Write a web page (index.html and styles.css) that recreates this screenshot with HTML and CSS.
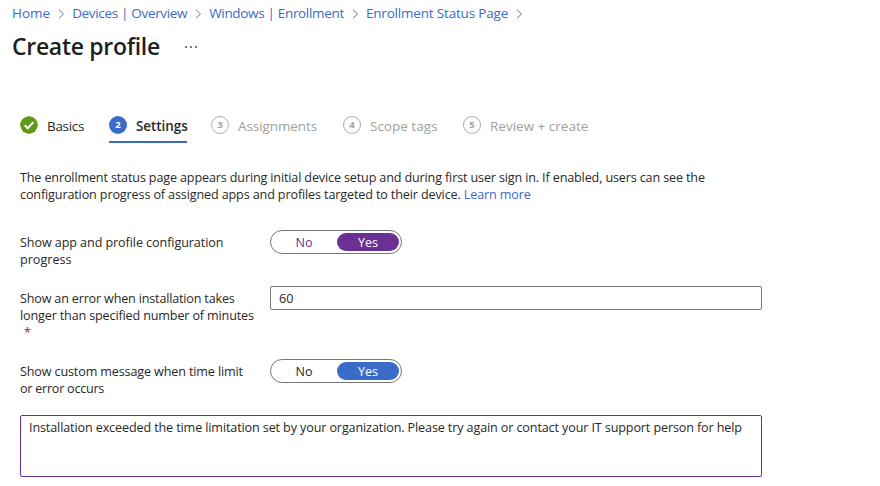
FILE: index.html
```html
<!DOCTYPE html>
<html lang="en">
<head>
<meta charset="utf-8">
<title>Create profile</title>
<link rel="stylesheet" href="styles.css">
</head>
<body>
<nav class="crumbs">
<a class="c-home">Home</a><svg class="chev" viewBox="0 0 7 10"><path d="M1 .8 5.5 5 1 9.2"/></svg>
<a class="c-devices">Devices | Overview</a><svg class="chev" viewBox="0 0 7 10"><path d="M1 .8 5.5 5 1 9.2"/></svg>
<a class="c-windows">Windows | Enrollment</a><svg class="chev" viewBox="0 0 7 10"><path d="M1 .8 5.5 5 1 9.2"/></svg>
<a class="c-status">Enrollment Status Page</a><svg class="chev" viewBox="0 0 7 10"><path d="M1 .8 5.5 5 1 9.2"/></svg>
</nav>
<header class="heading">
<h1>Create profile</h1>
<svg class="more" viewBox="0 0 12 2"><path d="M0 0h2v2H0zM5 0h2v2H5zM10 0h2v2h-2z"/></svg>
</header>
<div class="steps">
<div class="step basics"><svg class="dot" viewBox="0 0 18 18"><circle cx="9" cy="9" r="9" fill="#5f9a17"/><path d="m4.7 9.2 3 3 5.6-6" fill="none" stroke="#fff" stroke-width="2"/></svg><span>Basics</span></div>
<div class="step active"><i class="dot">2</i><span>Settings</span></div>
<div class="step todo assignments"><i class="dot">3</i><span>Assignments</span></div>
<div class="step todo scope"><i class="dot">4</i><span>Scope tags</span></div>
<div class="step todo review"><i class="dot">5</i><span>Review + create</span></div>
</div>
<main>
<p class="intro"><span class="i1">The enrollment status page appears during initial device setup and during first user sign in. If enabled, users can see the</span><br><span class="i2">configuration progress of assigned apps and profiles targeted to their device. <a>Learn more</a></span></p>
<div class="row first">
<div class="label"><span class="l1">Show app and profile configuration</span><br>progress</div>
<div class="toggle purple"><span>No</span><b>Yes</b></div>
</div>
<div class="row second">
<div class="label"><span class="l2">Show an error when installation takes</span><br><span class="l3">longer than specified number of minutes</span><br><em>*</em></div>
<div class="input">60</div>
</div>
<div class="row third">
<div class="label"><span class="l4">Show custom message when time limit</span><br><span class="l5">or error occurs</span></div>
<div class="toggle"><span>No</span><b>Yes</b></div>
</div>
<div class="message"><span>Installation exceeded the time limitation set by your organization. Please try again or contact your IT support person for help</span></div>
</main>
</body>
</html>
```
FILE: styles.css
```css
* { box-sizing: border-box; }
body { margin: 0; width: 880px; height: 486px; overflow: hidden; background: #fff; color: #292827; font: 12.6px/17px "Segoe UI", "Open Sans", sans-serif; white-space: nowrap; }
a { color: #3b6bc9; }
.crumbs { display: flex; align-items: center; height: 26px; padding-left: 12px; font-size: 13.5px; }
.c-devices, .c-windows { letter-spacing: -.33px; }
.c-status { letter-spacing: -.18px; }
.chev { width: 7px; height: 10px; margin: 2px 7px 0 8px; fill: none; stroke: #777; stroke-width: 1; }
.heading { display: flex; align-items: center; height: 42px; padding-left: 12px; }
h1 { margin: -2px 0 0; width: 173px; font-size: 23px; line-height: 32px; font-weight: 600; letter-spacing: -.3px; color: #201f1e; }
.more { width: 12px; height: 2px; fill: #777; }
.steps { display: flex; height: 32px; margin: 43px 0 0 20px; font-size: 13.5px; }
.step { display: flex; height: 32px; }
.step span { line-height: 30px; letter-spacing: -.08px; }
.dot { width: 18px; height: 18px; margin: 5px 9px 0 0; flex: none; border-radius: 50%; text-align: center; font: 700 9.5px/17px "Segoe UI", "Open Sans", sans-serif; }
.basics { width: 89px; }
.basics span { letter-spacing: -.3px; }
.active { width: 78px; margin-right: 24px; border-bottom: 2px solid #3b6bc9; font-weight: 600; }
.active .dot { background: #3b6bc9; color: #fff; }
.todo { color: #a19f9d; }
.todo .dot { border: 1px solid #b0aeac; line-height: 15px; }
.assignments { width: 132px; }
.scope { width: 120px; }
.scope span, .review span { letter-spacing: 0; }
main { padding-left: 20px; }
.intro { margin: 26px 0 0; }
.i1 { letter-spacing: -.146px; }
.i2 { letter-spacing: -.133px; }
.l1 { letter-spacing: -.09px; }
.l2 { letter-spacing: -.18px; }
.l3 { letter-spacing: -.15px; }
.l4 { letter-spacing: -.14px; }
.l5 { letter-spacing: -.25px; }
.row { display: flex; align-items: flex-start; }
.label { width: 250px; }
.first { height: 55px; margin-top: 28px; padding-top: 3px; }
.first .toggle { margin-top: -4px; }
.second { height: 73px; }
.third { height: 56px; }
.second .label, .third .label { padding-top: 4px; }
em { margin-left: 4px; color: #a4262c; font-style: normal; }
.toggle { display: flex; width: 132px; height: 24px; padding: 2px; border: 1px solid #777; border-radius: 12px; line-height: 19px; text-align: center; }
.toggle span { width: 64px; padding-right: 2px; }
.toggle b { width: 62px; height: 18px; border-radius: 9px; background: #3b6bc9; color: #fff; font-weight: 400; }
.purple span { color: #6b3093; }
.purple b { background: #6b3093; }
.input { width: 492px; height: 24px; padding-left: 8px; border: 1px solid #777; border-radius: 2px; line-height: 23px; }
.message { width: 742px; height: 62px; padding: 3px 8px; border: 1px solid #6b3093; border-radius: 2px; letter-spacing: -.126px; }
```
